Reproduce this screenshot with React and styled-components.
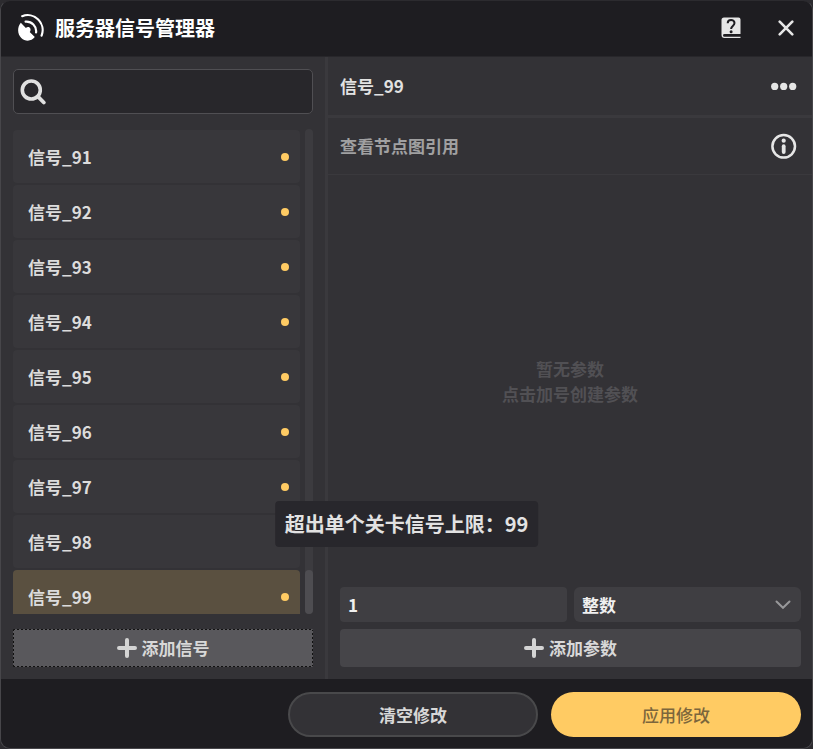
import React, { useState } from 'react';
import styled, { createGlobalStyle, css } from 'styled-components';

const GlobalStyle = createGlobalStyle`
	* {
		box-sizing: border-box;
	}

	body {
		margin: 0;
		background: #2c2b2f;
	}

	body,
	button,
	input,
	select {
		font-family: 'Noto Sans CJK SC', sans-serif;
		font-size: 17px;
		font-weight: 700;
		line-height: 26px;
	}
`;

const Window = styled.div`
	display: flex;
	flex-direction: column;
	height: 100vh;
	border: 1px solid #47464a;
	border-top-color: #2c2b2f;
	border-radius: 10px;
	overflow: hidden;
	background: #333236;
	color: #dcdcdc;
`;

const Header = styled.header`
	display: flex;
	align-items: center;
	flex: none;
	height: 56px;
	padding: 0 13px 2px 16px;
	background: #1e1d21;
	border-bottom: 1px solid #28272b;
`;

const Title = styled.h1`
	flex: 1;
	margin: 0 0 0 10px;
	font-size: 20px;
	font-weight: 700;
	line-height: 28px;
	color: #fff;
`;

const IconButton = styled.button`
	display: flex;
	align-items: center;
	justify-content: center;
	width: 26px;
	height: 26px;
	margin-left: ${props => props.$space || '0'};
	padding: 0;
	border: 0;
	background: none;
	color: #e6e6e6;
	cursor: pointer;
`;

const Body = styled.div`
	display: flex;
	flex: 1;
	min-height: 0;
`;

const Sidebar = styled.aside`
	display: flex;
	flex-direction: column;
	flex: 0 1 327px;
	min-width: 0;
	padding: 12px;
	border-right: 3px solid #3a393d;
`;

const SearchBox = styled.label`
	display: flex;
	align-items: center;
	flex: none;
	height: 45px;
	padding: 0 6px;
	border: 1px solid #504f53;
	border-radius: 5px;
	background: #28272b;

	> svg {
		flex: none;
	}
`;

const SearchInput = styled.input`
	flex: 1;
	min-width: 0;
	margin-left: 8px;
	border: 0;
	outline: none;
	background: none;
	color: #e2e2e2;
`;

const ListArea = styled.div`
	display: flex;
	flex: 1;
	gap: 5px;
	min-height: 0;
	margin: 15px 0;
`;

const SignalList = styled.ul`
	display: flex;
	flex-direction: column;
	flex: 1;
	gap: 2px;
	margin: 0;
	padding: 1px 0 0;
	overflow: hidden;
	list-style: none;
`;

const SignalRow = styled.button`
	display: flex;
	align-items: center;
	justify-content: space-between;
	width: 100%;
	height: 53px;
	padding: 0 11px 0 15px;
	border: 0;
	border-radius: 4px;
	background: ${props => (props.$active ? '#5a5040' : '#38373b')};
	color: #dcdcdc;
	text-align: left;
	cursor: pointer;
`;

const Dot = styled.span`
	width: 8px;
	height: 8px;
	border-radius: 50%;
	background: #ffcb63;
`;

const ScrollTrack = styled.div`
	display: flex;
	align-items: flex-end;
	flex: none;
	width: 8px;
	border-radius: 4px;
	background: #3c3b3f;
`;

const ScrollThumb = styled.div`
	width: 100%;
	height: 9%;
	border-radius: 4px;
	background: #4e4d51;
`;

const dottedEdge = css`
	border-radius: 1px;
	background:
		repeating-linear-gradient(90deg, #111 0 2px, #59585c 2px 4px) top / 100%
			1px no-repeat,
		repeating-linear-gradient(90deg, #111 0 2px, #59585c 2px 4px) bottom /
			100% 1px no-repeat,
		repeating-linear-gradient(#111 0 2px, #59585c 2px 4px) left / 1px 100%
			no-repeat,
		repeating-linear-gradient(#111 0 2px, #59585c 2px 4px) right / 1px 100%
			no-repeat,
		#59585c;
`;

const AddButton = styled.button`
	display: flex;
	align-items: center;
	justify-content: center;
	gap: 5px;
	flex: none;
	height: 38px;
	padding: 0;
	border: 0;
	border-radius: 4px;
	background: #464549;
	color: #d8d8d8;
	cursor: pointer;
	${props => props.$focused && dottedEdge}
`;

const Detail = styled.main`
	display: flex;
	flex-direction: column;
	flex: 1;
	min-width: 0;
`;

const DetailRow = styled.div`
	display: flex;
	align-items: center;
	justify-content: space-between;
	flex: none;
	height: ${props => (props.$muted ? '57px' : '61px')};
	padding: 0 15px 0 12px;
	border-bottom: ${props => (props.$muted ? '1px' : '3px')} solid #3a393d;
	color: ${props => (props.$muted ? '#a0a0a1' : '#e2e2e2')};
`;

const Empty = styled.div`
	display: flex;
	flex-direction: column;
	justify-content: center;
	flex: 1;
	text-align: center;
	color: #515054;

	p {
		margin: 0;
		line-height: 25px;
	}
`;

const ParamForm = styled.div`
	display: grid;
	grid-template-columns: 1fr 1fr;
	gap: 7px;
	padding: 0 11px 12px 12px;

	> button {
		grid-column: 1 / -1;
	}
`;

const ParamInput = styled.input`
	min-width: 0;
	height: 35px;
	padding: 0 8px;
	border: 0;
	border-radius: 4px;
	background: #3f3e42;
	color: #f0f0f0;
`;

const SelectBox = styled.div`
	display: grid;
	align-items: center;

	> * {
		grid-area: 1 / 1;
	}

	> svg {
		justify-self: end;
		margin-right: 10px;
		pointer-events: none;
	}
`;

const Select = styled.select`
	width: 100%;
	height: 35px;
	padding: 0 8px;
	border: 0;
	border-radius: 6px;
	appearance: none;
	background: #3f3e42;
	color: #f0f0f0;
`;

const Footer = styled.footer`
	display: flex;
	align-items: center;
	justify-content: flex-end;
	gap: 13px;
	flex: none;
	height: 69px;
	padding: 2px 11px 0;
	background: #1e1d21;
`;

const PillButton = styled.button`
	flex: 0 1 250px;
	height: 45px;
	padding: 0;
	border: ${props => (props.$primary ? '0' : '2px solid #49494b')};
	border-radius: 23px;
	background: ${props => (props.$primary ? '#ffcb63' : '#333236')};
	color: ${props => (props.$primary ? '#7c663c' : '#d8d8d8')};
	font-weight: ${props => (props.$primary ? '500' : '700')};
	cursor: pointer;
`;

const Toast = styled.div`
	position: absolute;
	top: 70%;
	left: 50%;
	transform: translate(-50%, -50%);
	padding: 9px 10px;
	border-radius: 4px;
	background: #28272c;
	color: #e2e2e2;
	font-size: 20px;
	line-height: 28px;
	white-space: nowrap;
`;

const DishIcon = () => (
	<svg width="28" height="28" viewBox="0 0 28 28" fill="none">
		<path
			d="M3.8 8.8 L8.9 13.9 C10.2 12.6 12.4 12.8 13.2 14.2 C13.9 15.5 13.6 17.2 12.7 18 L17.8 23.1 C14.6 27.4 8.4 28 4.3 24 C.2 19.9 .2 12.8 3.8 8.8Z"
			fill="#fff"
		/>
		<path
			d="M5.2 2.2 A15 15 0 0 1 24.6 21.6 M8.6 7.7 A9.6 9.6 0 0 1 19.1 18.3"
			stroke="#fff"
			strokeWidth="2.2"
			strokeLinecap="round"
		/>
	</svg>
);

const HelpIcon = () => (
	<svg width="20" height="22" viewBox="0 0 20 22" fill="none">
		<path
			d="M3 .5H17.5Q19.5 .5 19.5 2.5V17H3.6Q2 17 2 18.3Q2 19.8 3.6 19.8H19.5V21H3.4Q.5 21 .5 18V3Q.5 .5 3 .5Z"
			fill="#e6e6e6"
		/>
		<path
			d="M6.7 6.3C6.7 1.8 13.5 2 13.5 6.1C13.5 9 10.1 9 10.1 12"
			stroke="#1e1d21"
			strokeWidth="2"
		/>
		<circle cx="10.1" cy="14.8" r="1.5" fill="#1e1d21" />
	</svg>
);

const CloseIcon = () => (
	<svg width="16" height="16" viewBox="0 0 16 16">
		<path
			d="M1.7 1.7 14.3 14.3M14.3 1.7 1.7 14.3"
			stroke="#e6e6e6"
			strokeWidth="2.6"
			strokeLinecap="round"
		/>
	</svg>
);

const SearchIcon = () => (
	<svg width="27" height="27" viewBox="0 0 27 27" fill="none">
		<circle cx="11.3" cy="12" r="9" stroke="#e0e0e0" strokeWidth="3.6" />
		<path
			d="M18 18.7 23.8 24.5"
			stroke="#e0e0e0"
			strokeWidth="3.8"
			strokeLinecap="round"
		/>
	</svg>
);

const MoreIcon = () => (
	<svg width="26" height="8" viewBox="0 0 26 8" fill="#e6e6e6">
		<circle cx="3.7" cy="4.4" r="3.6" />
		<circle cx="12.7" cy="4.4" r="3.6" />
		<circle cx="21.7" cy="4.4" r="3.6" />
	</svg>
);

const InfoIcon = () => (
	<svg width="26" height="26" viewBox="0 0 26 26" fill="none">
		<circle cx="12.7" cy="13.3" r="11.3" stroke="#e6e6e6" strokeWidth="2.5" />
		<circle cx="12.7" cy="7.7" r="2.1" fill="#e6e6e6" />
		<rect x="10.8" y="11.3" width="3.8" height="9.6" rx="1.9" fill="#e6e6e6" />
	</svg>
);

const PlusIcon = () => (
	<svg width="20" height="20" viewBox="0 0 20 20">
		<path
			d="M10 2V18M2 10H18"
			stroke="#d4d4d4"
			strokeWidth="4"
			strokeLinecap="round"
		/>
	</svg>
);

const ChevronIcon = () => (
	<svg width="16" height="10" viewBox="0 0 16 10" fill="none">
		<path
			d="M1.5 1.5 8 7.8 14.5 1.5"
			stroke="#98989a"
			strokeWidth="2"
			strokeLinecap="round"
		/>
	</svg>
);

const signals = [91, 92, 93, 94, 95, 96, 97, 98, 99].map(id => ({
	id,
	name: `信号_${id}`,
	changed: id !== 98
}));

const App = () => {
	const [activeId, setActiveId] = useState(99);
	const active = signals.find(signal => signal.id === activeId);

	return (
		<Window>
			<GlobalStyle />
			<Header>
				<DishIcon />
				<Title>服务器信号管理器</Title>
				<IconButton aria-label="帮助">
					<HelpIcon />
				</IconButton>
				<IconButton aria-label="关闭" $space="29px">
					<CloseIcon />
				</IconButton>
			</Header>

			<Body>
				<Sidebar>
					<SearchBox>
						<SearchIcon />
						<SearchInput type="text" aria-label="搜索" />
					</SearchBox>

					<ListArea>
						<SignalList>
							{signals.map(signal => (
								<li key={signal.id}>
									<SignalRow
										$active={signal.id === activeId}
										onClick={() => setActiveId(signal.id)}
									>
										{signal.name}
										{signal.changed && <Dot />}
									</SignalRow>
								</li>
							))}
						</SignalList>
						<ScrollTrack>
							<ScrollThumb />
						</ScrollTrack>
					</ListArea>

					<AddButton $focused>
						<PlusIcon />
						添加信号
					</AddButton>
				</Sidebar>

				<Detail>
					<DetailRow>
						{active.name}
						<IconButton aria-label="更多">
							<MoreIcon />
						</IconButton>
					</DetailRow>
					<DetailRow $muted>
						查看节点图引用
						<IconButton aria-label="信息">
							<InfoIcon />
						</IconButton>
					</DetailRow>

					<Empty>
						<p>暂无参数</p>
						<p>点击加号创建参数</p>
					</Empty>

					<ParamForm>
						<ParamInput type="text" aria-label="数量" defaultValue="1" />
						<SelectBox>
							<Select aria-label="类型" defaultValue="int">
								<option value="int">整数</option>
							</Select>
							<ChevronIcon />
						</SelectBox>
						<AddButton>
							<PlusIcon />
							添加参数
						</AddButton>
					</ParamForm>
				</Detail>
			</Body>

			<Footer>
				<PillButton>清空修改</PillButton>
				<PillButton $primary>应用修改</PillButton>
			</Footer>

			<Toast role="status">超出单个关卡信号上限：99</Toast>
		</Window>
	);
};

export default App;
